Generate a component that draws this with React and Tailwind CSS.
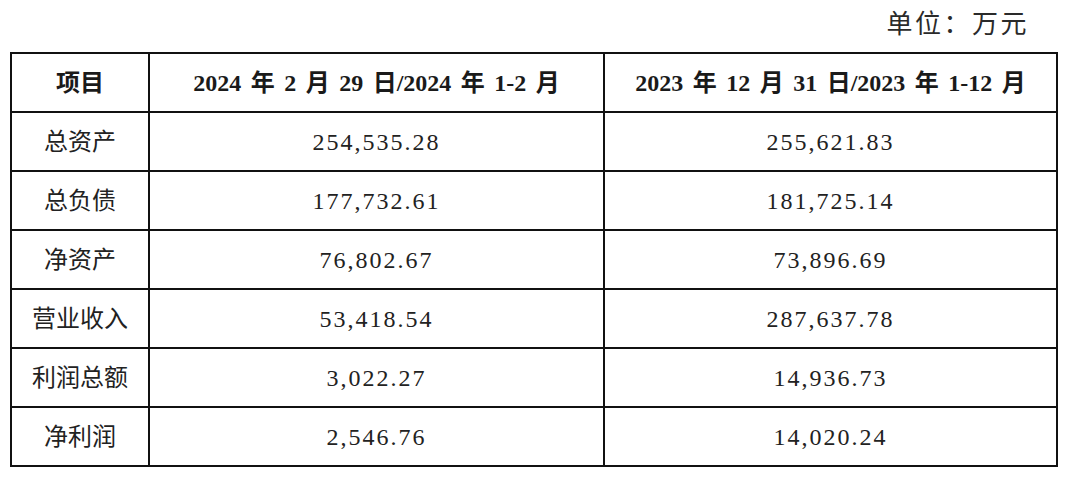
import React from "react";

const rows = [
  ["总资产", "254,535.28", "255,621.83"],
  ["总负债", "177,732.61", "181,725.14"],
  ["净资产", "76,802.67", "73,896.69"],
  ["营业收入", "53,418.54", "287,637.78"],
  ["利润总额", "3,022.27", "14,936.73"],
  ["净利润", "2,546.76", "14,020.24"],
];

const font = {
  fontFamily: '"Liberation Serif", "Noto Sans CJK SC", serif',
};

export default function App() {
  return (
    <div className="w-[1080px] h-[480px] bg-white text-[#1a1a1a]" style={font}>
      <div className="flex justify-end pr-[51px] pt-[8px] h-[52px]">
        <span className="text-[26px] leading-[34px] tracking-[2.5px] text-[#2a2a2a]">单位：万元</span>
      </div>
      <table className="ml-[10px] w-[1046px] border-collapse border-2 border-[#111] table-fixed">
        <colgroup>
          <col className="w-[138px]" />
          <col className="w-[455px]" />
          <col className="w-[453px]" />
        </colgroup>
        <thead>
          <tr className="h-[59px]">
            <th className="border-2 border-[#111] text-[24px] font-bold text-center">项目</th>
            <th className="border-2 border-[#111] text-[24px] font-bold text-center [word-spacing:3.5px]">
              2024 年 2 月 29 日/2024 年 1-2 月
            </th>
            <th className="border-2 border-[#111] text-[24px] font-bold text-center [word-spacing:3.5px]">
              2023 年 12 月 31 日/2023 年 1-12 月
            </th>
          </tr>
        </thead>
        <tbody>
          {rows.map((r) => (
            <tr key={r[0]} className="h-[59px]">
              <td className="border-2 border-[#111] text-[24px] text-center text-[#222]">{r[0]}</td>
              <td className="border-2 border-[#111] text-[24px] text-center text-[#222] tracking-[2px]">{r[1]}</td>
              <td className="border-2 border-[#111] text-[24px] text-center text-[#222] tracking-[2px]">{r[2]}</td>
            </tr>
          ))}
        </tbody>
      </table>
    </div>
  );
}
